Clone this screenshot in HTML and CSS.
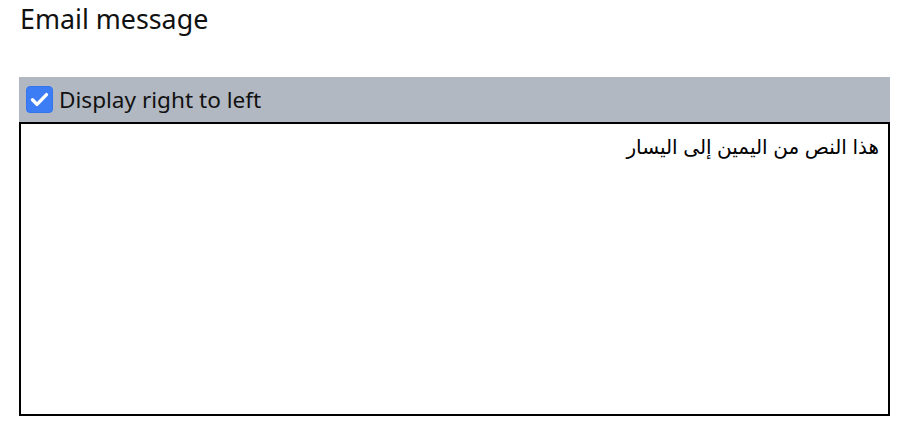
FILE: index.html
```html
<!DOCTYPE html>
<html lang="en">
<head>
<meta charset="utf-8">
<link rel="stylesheet" href="styles.css">
</head>
<body>
<main class="page">
  <h1 class="title">Email message</h1>
  <div class="editor">
    <label class="toolbar">
      <span class="check" aria-hidden="true">
        <svg viewBox="0 0 27 27" width="27" height="27">
          <rect x="0.5" y="0.5" width="26" height="26" rx="3.5" fill="#3c7df5" stroke="#3475ee"/>
          <path d="M6.5 13.8 L11 18.4 L20.5 8.6" fill="none" stroke="#fff" stroke-width="3.4" stroke-linecap="round" stroke-linejoin="round"/>
        </svg>
      </span>
      <span class="label">Display right to left</span>
    </label>
    <div class="message" dir="rtl" lang="ar">هذا النص من اليمين إلى اليسار</div>
  </div>
</main>
</body>
</html>
```
FILE: styles.css
```css
html, body {
  margin: 0;
  padding: 0;
  background: #ffffff;
}
.page {
  padding: 0 12px 0 19px;
  font-family: "Noto Sans", "Open Sans", sans-serif;
  color: #111;
}
.title {
  margin: 0;
  padding-top: 1px;
  padding-left: 1px;
  font-size: 26.8px;
  font-weight: 400;
  line-height: 35px;
}
.editor {
  margin-top: 41px;
  display: flex;
  flex-direction: column;
}
.toolbar {
  display: flex;
  align-items: center;
  gap: 6px;
  height: 45px;
  padding-left: 7px;
  background: #b1b8c1;
  box-sizing: border-box;
}
.check {
  display: flex;
  width: 27px;
  height: 27px;
}
.label {
  font-size: 22.6px;
  line-height: 30px;
  color: #111;
}
.message {
  height: 294px;
  box-sizing: border-box;
  border: 2px solid #000;
  padding: 10px 9px 0 8px;
  font-family: "Liberation Sans", Arial, "DejaVu Sans", sans-serif;
  font-size: 20px;
  line-height: 26px;
  color: #000;
  text-align: right;
}
```
